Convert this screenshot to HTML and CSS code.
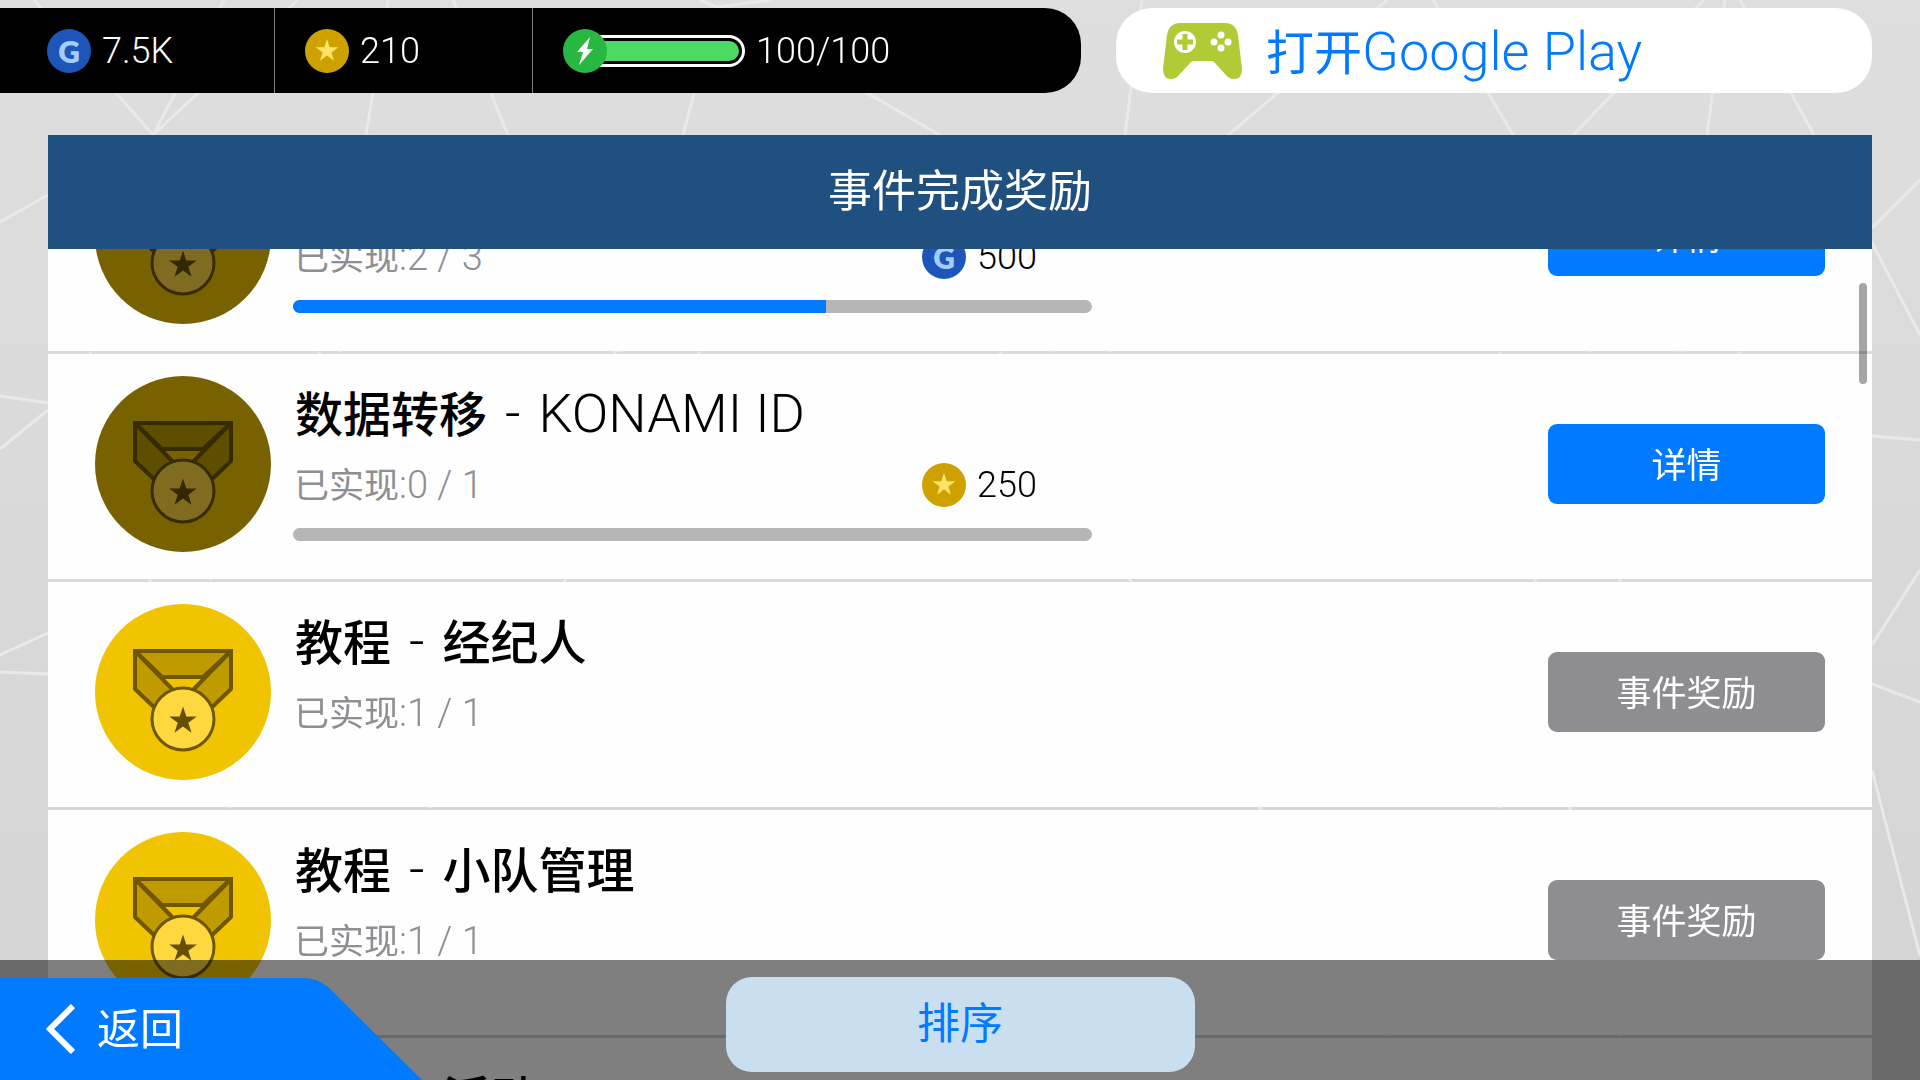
FILE: index.html
```html
<!DOCTYPE html>
<html lang="zh-CN">
<head>
<meta charset="UTF-8">
<meta name="viewport" content="width=device-width, initial-scale=1.0">
<title>事件完成奖励</title>
<link rel="stylesheet" href="styles.css">
</head>
<body>
<!-- shared icons -->
<svg class="sprite" aria-hidden="true">
    <symbol id="star" viewBox="-10 -10 20 20">
        <path d="M0-10 2.25-3.09H9.51L3.63 1.18 5.88 8.09 0 3.82-5.88 8.09-3.63 1.18-9.51-3.09H-2.25Z" fill="currentColor"/>
    </symbol>
    <symbol id="medal" viewBox="0 0 176 176">
        <circle cx="88" cy="88" r="88" fill="#f0c400"/>
        <g fill="#bf9b00" stroke="#6e5700" stroke-width="4" stroke-linejoin="bevel">
            <path d="M40 47H136L108 73H67Z"/>
            <path d="M40 47V85L62 106 80 88Z"/>
            <path d="M136 47V85L114 106 96 88Z"/>
        </g>
        <path d="M40 60V47H136V60" fill="none" stroke="#6e5700" stroke-width="4"/>
        <circle cx="88" cy="115" r="31" fill="#ffd83f" stroke="#6e5700" stroke-width="3"/>
        <path d="M88 102.500 91.300 112.500H101.800L93.300 118.700 96.500 128.700 88 122.500 79.500 128.700 82.700 118.700 74.200 112.500H84.700Z" fill="#665000"/>
    </symbol>
</svg>

<svg class="backdrop" viewBox="0 0 1920 1080" preserveAspectRatio="none" aria-hidden="true">
    <path d="M34 0 153 135M298 0 153 135M224 0 153 135M388 0 366 135 340 352M453 0 508 135 620 352M700 0 717 7 771 0M717 7 683 135 600 400M717 7 940 135M1142 0 1125 135 1110 352M1387 0 1228 135 1050 352M1433 0 1513 135 1590 352M1704 0 1573 135M1725 0 1707 135 1680 352M1740 0 1814 135 1872 243 1920 335"/>
    <path d="M0 222 48 195M1872 228 1920 180M1872 436 1920 440M1872 684 1920 702M1872 770 1920 956M1872 645 1920 570M0 396 48 403M48 410 0 449M0 655 48 633M0 672 48 674"/>
    <path d="M90 352 150 580 230 808M320 352 210 580M700 352 430 808M1000 352 1260 808 1390 1036M1500 352 1570 808 1620 1036M1740 352 1500 808"/>
</svg>

<div class="page">
    <header class="topbar">
        <ul class="status">
            <li class="status-item">
                <span class="coin coin-gp">G</span>
                <span>7.5K</span>
            </li>
            <li class="status-item">
                <span class="coin coin-star"><svg class="coin-icon"><use href="#star"/></svg></span>
                <span>210</span>
            </li>
            <li class="status-item">
                <span class="energy">
                    <span class="coin coin-energy">
                        <svg class="bolt" viewBox="0 0 16 28"><path d="M13 0 0 15H6L2 28 16 12H10Z" fill="#fff"/></svg>
                    </span>
                    <span class="energy-track"><span class="energy-fill" style="width: 100%"></span></span>
                </span>
                <span>100/100</span>
            </li>
        </ul>
        <button class="play-btn" type="button">
            <svg class="gamepad" viewBox="0 0 79 56">
                <path d="M17 0H62Q73 0 75 12L79 46Q79 56 71 56 66 56 63 52L51 39Q50 38 48 38H31Q29 38 28 39L16 52Q13 56 8 56 0 56 0 46L4 12Q6 0 17 0Z" fill="#b1cb36"/>
                <circle cx="22" cy="19" r="11" fill="#fff"/>
                <path d="M22 11V27M14 19H30" stroke="#b1cb36" stroke-width="5"/>
                <g fill="#fff">
                    <circle cx="58" cy="12" r="3.500"/>
                    <circle cx="58" cy="25" r="3.500"/>
                    <circle cx="51" cy="19" r="3.500"/>
                    <circle cx="65" cy="19" r="3.500"/>
                </g>
            </svg>
            <span class="play-label">打开<span class="latin">Google Play</span></span>
        </button>
    </header>

    <main class="panel">
        <h1 class="panel-title">事件完成奖励</h1>
        <div class="scroller">
            <ul class="events">
                <li class="event">
                    <svg class="medal locked"><use href="#medal"/></svg>
                    <div class="event-body">
                        <h2 class="event-title">教程</h2>
                        <div class="event-info">
                            <p class="event-count">已实现<span class="digits">:2 / 3</span></p>
                            <p class="reward"><span class="coin coin-gp">G</span>500</p>
                        </div>
                        <div class="progress"><div class="progress-fill" style="width: 66.67%"></div></div>
                    </div>
                    <button class="event-btn" type="button">详情</button>
                </li>
                <li class="event">
                    <svg class="medal locked"><use href="#medal"/></svg>
                    <div class="event-body">
                        <h2 class="event-title">数据转移<span class="latin dash">-</span><span class="latin">KONAMI ID</span></h2>
                        <div class="event-info">
                            <p class="event-count">已实现<span class="digits">:0 / 1</span></p>
                            <p class="reward"><span class="coin coin-star"><svg class="coin-icon"><use href="#star"/></svg></span>250</p>
                        </div>
                        <div class="progress"><div class="progress-fill" style="width: 0%"></div></div>
                    </div>
                    <button class="event-btn" type="button">详情</button>
                </li>
                <li class="event">
                    <svg class="medal"><use href="#medal"/></svg>
                    <div class="event-body">
                        <h2 class="event-title">教程<span class="latin dash">-</span>经纪人</h2>
                        <div class="event-info">
                            <p class="event-count">已实现<span class="digits">:1 / 1</span></p>
                        </div>
                    </div>
                    <button class="event-btn done" type="button">事件奖励</button>
                </li>
                <li class="event">
                    <svg class="medal"><use href="#medal"/></svg>
                    <div class="event-body">
                        <h2 class="event-title">教程<span class="latin dash">-</span>小队管理</h2>
                        <div class="event-info">
                            <p class="event-count">已实现<span class="digits">:1 / 1</span></p>
                        </div>
                    </div>
                    <button class="event-btn done" type="button">事件奖励</button>
                </li>
                <li class="event">
                    <svg class="medal"><use href="#medal"/></svg>
                    <div class="event-body">
                        <h2 class="event-title">教程<span class="latin dash">-</span>活动</h2>
                    </div>
                </li>
            </ul>
            <div class="scroll-thumb"></div>
        </div>
    </main>
</div>

<footer class="footer">
    <button class="back-btn" type="button">
        <svg class="chevron" viewBox="0 0 29 50"><path d="M27 2 4 25 27 48" fill="none" stroke="#fff" stroke-width="6"/></svg>
        <span class="back-label">返回</span>
    </button>
    <button class="sort-btn" type="button">排序</button>
</footer>
</body>
</html>
```
FILE: styles.css
```css
* {
    box-sizing: border-box;
}
body {
    margin: 0;
    height: 100vh;
    overflow: hidden;
    background: linear-gradient(#dedede, #d4d4d4);
    font-family: Roboto, "Noto Sans CJK SC", sans-serif;
    font-size: 36px;
    color: #000;
}
h1, h2, p, ul {
    margin: 0;
    padding: 0;
}
ul {
    list-style: none;
}
button {
    border: none;
    padding: 0;
    font-family: inherit;
    cursor: pointer;
}
.sprite {
    position: absolute;
    width: 0;
    height: 0;
}
.backdrop {
    position: fixed;
    inset: 0;
    width: 100%;
    height: 100%;
    fill: none;
    stroke: #e9e9e9;
    stroke-width: 3;
}
.page {
    position: relative;
    display: flex;
    flex-direction: column;
    height: 100%;
}

/* top bar */
.topbar {
    display: flex;
    gap: 35px;
    padding: 8px 48px 0 0;
    margin-bottom: 42px;
}
.status {
    display: flex;
    flex: 0 1 1081px;
    height: 85px;
    background-color: #000;
    border-radius: 0 36px 36px 0;
    color: #fff;
    font-weight: 300;
}
.status-item {
    display: flex;
    align-items: center;
    gap: 11px;
    width: 258px;
    padding-left: 30px;
    border-right: 1px solid #808080;
}
.status-item:first-child {
    width: 275px;
    padding-left: 47px;
}
.status-item:last-child {
    flex: 1;
    border-right: none;
}
.coin {
    display: inline-flex;
    align-items: center;
    justify-content: center;
    flex: none;
    width: 44px;
    height: 44px;
    border-radius: 50%;
}
.coin-gp {
    background-color: #1d55b8;
    color: #a3ccff;
    font-family: Lato, sans-serif;
    font-size: 30px;
    font-weight: 800;
}
.coin-star {
    background-color: #cda200;
    color: #ffe267;
}
.coin-energy {
    position: relative;
    background-color: #28b842;
}
.coin-icon {
    width: 24px;
    height: 24px;
}
.bolt {
    width: 16px;
    height: 28px;
}
.energy {
    display: flex;
    align-items: center;
}
.energy-track {
    width: 146px;
    height: 32px;
    margin-left: -8px;
    padding: 3px;
    border: 3px solid #fff;
    border-left: none;
    border-radius: 0 16px 16px 0;
}
.energy-fill {
    display: block;
    height: 100%;
    background-color: #4bdb64;
    border-radius: 0 10px 10px 0;
}
.play-btn {
    display: flex;
    flex: 1;
    align-items: center;
    gap: 24px;
    height: 85px;
    padding-left: 47px;
    background-color: #fff;
    border-radius: 36px;
    color: #007aff;
    font-size: 48px;
    line-height: 60px;
}
.play-label {
    padding-top: 4px;
}
.gamepad {
    width: 79px;
    height: 56px;
}
.latin {
    font-size: 54px;
    font-weight: 300;
}
.dash {
    margin: 0 18px;
}
.digits {
    font-size: 38px;
    font-weight: 300;
}

/* event list */
.panel {
    display: flex;
    flex: 1;
    flex-direction: column;
    min-height: 0;
    margin: 0 48px;
}
.panel-title {
    flex: none;
    background-color: #20507f;
    color: #fff;
    font-size: 44px;
    font-weight: 400;
    line-height: 114px;
    text-align: center;
}
.scroller {
    position: relative;
    flex: 1;
    min-height: 0;
    overflow: hidden;
}
.events {
    display: flex;
    flex-direction: column;
    gap: 3px;
    margin-top: -123px;
}
.event {
    display: flex;
    gap: 22px;
    height: 225px;
    padding: 22px 47px 27px;
    background-color: #fefefe;
}
.medal {
    flex: none;
    width: 176px;
    height: 176px;
}
.locked {
    filter: brightness(0.5);
}
.event-body {
    display: flex;
    flex: 0 1 799px;
    flex-direction: column;
    padding-top: 8px;
}
.event-title {
    height: 62px;
    margin-bottom: 16px;
    padding-left: 2px;
    font-size: 48px;
    font-weight: 500;
    line-height: 60px;
}
.event-info {
    display: flex;
    justify-content: space-between;
    height: 46px;
    margin-bottom: 20px;
    line-height: 46px;
}
.event-count {
    padding-left: 1px;
    color: #8e8e93;
    font-size: 35px;
}
.reward {
    display: flex;
    align-items: center;
    gap: 11px;
    width: 170px;
    font-weight: 300;
}
.progress {
    height: 13px;
    overflow: hidden;
    background-color: #b6b6b6;
    border-radius: 7px;
}
.progress-fill {
    height: 100%;
    background-color: #007aff;
}
.event-btn {
    flex: none;
    align-self: center;
    width: 277px;
    height: 80px;
    margin-left: auto;
    padding-bottom: 4px;
    background-color: #007aff;
    border-radius: 9px;
    color: #fff;
    font-size: 35px;
}
.done {
    background-color: #8e8e92;
}
.scroll-thumb {
    position: absolute;
    top: 34px;
    right: 5px;
    width: 8px;
    height: 101px;
    background-color: rgba(0, 0, 0, 0.35);
    border-radius: 4px;
}

/* bottom bar */
.footer {
    position: fixed;
    right: 0;
    bottom: 0;
    left: 0;
    display: grid;
    grid-template-columns: 1fr 469px 1fr;
    height: 120px;
    background-color: rgba(0, 0, 0, 0.5);
    font-size: 44px;
}
.back-btn {
    display: flex;
    align-items: center;
    align-self: end;
    gap: 22px;
    width: 422px;
    height: 102px;
    padding-left: 46px;
    background-color: #007aff;
    clip-path: path("M0 0H302Q317 0 328 9L422 102H0Z");
    color: #fff;
    font-size: 43px;
}
.back-label {
    padding-bottom: 6px;
}
.chevron {
    width: 29px;
    height: 50px;
}
.sort-btn {
    align-self: start;
    height: 95px;
    margin-top: 17px;
    padding-bottom: 10px;
    background-color: #c9deef;
    border-radius: 26px;
    color: #007aff;
    font-size: 43px;
}
```
